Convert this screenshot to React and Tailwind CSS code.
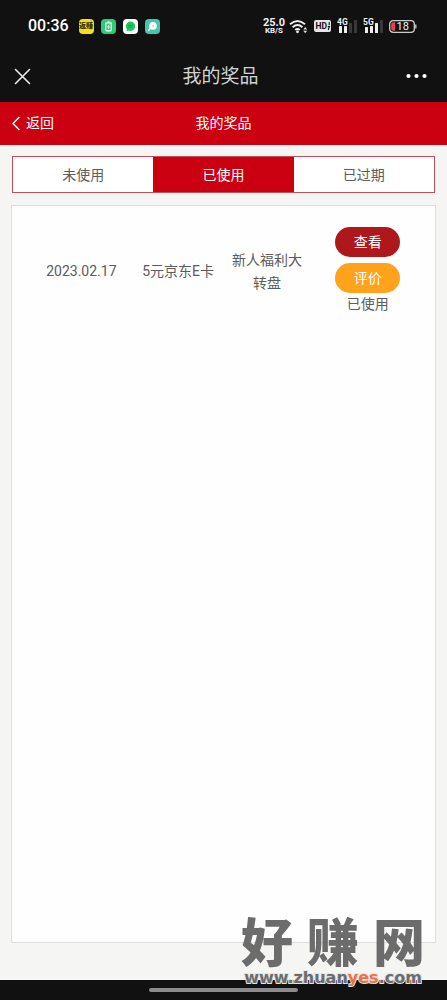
import React from 'react';

const prizes = [
  { date: '2023.02.17', name: '5元京东E卡', activity: '新人福利大转盘', status: '已使用' },
];

const tabs = ['未使用', '已使用', '已过期'];

function NotificationIcons() {
  return (
    <div className="flex items-center gap-[7px]" aria-hidden="true">
      <span className="flex size-[15px] items-center justify-center rounded-[4px] bg-[#f5df1b] text-[7px] leading-none font-black text-[#3a3410]">
        返赚
      </span>
      <svg className="size-[15px]" viewBox="0 0 15 15">
        <rect width="15" height="15" rx="4" fill="#2fca78" />
        <rect x="4.8" y="3.8" width="5.4" height="8" rx="0.8" fill="none" stroke="#fff" strokeWidth="1.2" />
        <path d="M6.3 2.8h2.4M8.2 5.7 6.8 7.8h1.6l-1 2" fill="none" stroke="#fff" strokeWidth="0.9" />
      </svg>
      <svg className="size-[15px]" viewBox="0 0 15 15">
        <rect width="15" height="15" rx="4" fill="#fff" />
        <circle cx="7.5" cy="7.3" r="4.7" fill="#1fc661" />
        <path d="M4 9.5 3.6 12l3-.8z" fill="#1fc661" />
        <path d="M4.8 6.4h5.2M5.2 8.2h4" stroke="#159448" strokeWidth="0.8" />
      </svg>
      <svg className="size-[15px]" viewBox="0 0 15 15">
        <rect width="15" height="15" rx="4" fill="#45c4ae" />
        <circle cx="8" cy="6.9" r="3.8" fill="#fff" />
        <path d="M5.5 9 3.5 11.6" stroke="#fff" strokeWidth="1.4" strokeLinecap="round" />
        <circle cx="8.2" cy="6.9" r="0.9" fill="#8edbd0" />
      </svg>
    </div>
  );
}

function Signal({ label, bars }) {
  return (
    <svg className="h-[16px] w-[20px]" viewBox="0 0 20 16">
      <text x="0" y="7" fontSize="8.5" fontWeight="700" fontFamily="Roboto, sans-serif" fill="#eee">
        {label}
      </text>
      {bars.map((b) => (
        <rect key={b.x} x={b.x} y={b.y} width="3" height={15 - b.y} rx="0.5" fill={b.on ? '#eee' : '#383838'} />
      ))}
    </svg>
  );
}

function StatusBar() {
  return (
    <div className="flex h-[52px] items-center justify-between pr-[30px] pl-[28px] text-[#f0f0f0]">
      <div className="flex items-center gap-[10px]">
        <span className="font-['Roboto',sans-serif] text-[16px] leading-none font-medium text-white">00:36</span>
        <NotificationIcons />
      </div>
      <div className="flex items-center gap-[6px]">
        <div className="flex items-center gap-1">
          <div className="flex flex-col items-center font-['Roboto',sans-serif] font-bold">
            <span className="text-[11px] leading-[9px]">25.0</span>
            <span className="text-[8px] leading-[8px]">KB/S</span>
          </div>
          <svg className="h-[15px] w-[19px]" viewBox="0 0 19 15" fill="none" stroke="#eee" strokeWidth="1.9">
            <path d="M1 5.3Q8.5-1.5 16 5.3M3.6 8.2q4.9-4.3 9.8 0M6.2 10.9q2.3-2 4.6 0" />
            <circle cx="8.5" cy="12.8" r="1.4" fill="#eee" stroke="none" />
            <path d="m14.2 10.5 2-2.4 2 2.4zM14.2 11.8l2 2.4 2-2.4z" fill="#ddd" stroke="none" />
          </svg>
        </div>
        <svg className="h-[12px] w-[17px]" viewBox="0 0 17 12">
          <rect width="17" height="12" rx="2" fill="#e6e6e6" />
          <text x="1.5" y="9.2" fontSize="8.5" fontWeight="700" fontFamily="Roboto, sans-serif" fill="#161616">HD</text>
          <path d="M15.2 2v3.2M13.8 6.6h1.6L14.2 10" fill="none" stroke="#161616" strokeWidth="1.1" />
        </svg>
        <Signal label="4G" bars={[{ x: 2, y: 8, on: true }, { x: 7, y: 8, on: true }, { x: 12, y: 5, on: false }, { x: 17, y: 2, on: false }]} />
        <Signal label="5G" bars={[{ x: 2, y: 9, on: true }, { x: 7, y: 8, on: true }, { x: 12, y: 5, on: true }, { x: 17, y: 2, on: false }]} />
        <svg className="h-[13px] w-[28px]" viewBox="0 0 28 13">
          <rect x="0.7" y="0.7" width="24.6" height="11.6" rx="3.4" fill="none" stroke="#ccc" strokeWidth="1.3" />
          <path d="M26.8 4.5v4" stroke="#ccc" strokeWidth="1.3" />
          <path d="M4.2 2.2H6v8.6H4.2a2 2 0 0 1-2-2V4.2a2 2 0 0 1 2-2z" fill="#e93e4e" />
          <text x="7.5" y="10.4" fontSize="11" fontFamily="Roboto, sans-serif" fill="#f2f2f2">18</text>
        </svg>
      </div>
    </div>
  );
}

function TitleBar() {
  return (
    <header className="grid h-[50px] grid-cols-[1fr_auto_1fr] items-center pr-5 pb-[2px] pl-[14px]">
      <button type="button" aria-label="关闭" className="justify-self-start">
        <svg className="block size-[17px]" viewBox="0 0 17 17" stroke="#ececec" strokeWidth="1.6" strokeLinecap="round">
          <path d="m1.5 1.5 14 14M15.5 1.5l-14 14" />
        </svg>
      </button>
      <h1 className="pt-[2px] text-[19px] leading-6 text-[#d2d2d2]">我的奖品</h1>
      <button type="button" aria-label="更多" className="justify-self-end">
        <svg className="block h-[6px] w-[21px]" viewBox="0 0 21 6" fill="#fff">
          <circle cx="2.5" cy="3" r="2.1" />
          <circle cx="10.5" cy="3" r="2.1" />
          <circle cx="18.5" cy="3" r="2.1" />
        </svg>
      </button>
    </header>
  );
}

function Watermark() {
  return (
    <div className="pointer-events-none absolute right-[22px] bottom-[14px] w-[184px] text-[#6c6c6c]">
      <div className="flex justify-between text-[52px] leading-[50px] font-black">
        <span>好</span>
        <span>赚</span>
        <span>网</span>
      </div>
      <div className="text-center font-['DejaVu_Sans',sans-serif] text-[16px] leading-[16px] font-bold whitespace-nowrap [paint-order:stroke_fill] [-webkit-text-stroke:2px_#e4e4e4]">
        www.zhuan<span className="text-[#f0704a]">yes</span>.com
      </div>
    </div>
  );
}

export default function App() {
  return (
    <div className="relative flex min-h-screen flex-col bg-[#f5f5f4] font-['Roboto','Noto_Sans_CJK_SC',sans-serif] text-[14px] text-[#5c5c5c]">
      <div className="bg-[#111]">
        <StatusBar />
        <TitleBar />
      </div>
      <nav className="grid h-[43px] grid-cols-[1fr_auto_1fr] items-center bg-[#cb0011] px-3 text-white">
        <a href="#back" className="flex items-center gap-[6px]">
          <svg className="h-[15px] w-[8px]" viewBox="0 0 8 15" fill="none" stroke="#fff" strokeWidth="1.5">
            <path d="M7.4 1 1 7.5 7.4 14" />
          </svg>
          返回
        </a>
        <h2>我的奖品</h2>
      </nav>
      <main className="flex flex-1 flex-col gap-3 px-[11px] pt-[11px] pb-[37px]">
        <div role="tablist" className="mx-px grid h-[37px] grid-cols-3 border border-[#c5505c] bg-white">
          {tabs.map((tab) => (
            <button
              key={tab}
              type="button"
              role="tab"
              aria-selected={tab === '已使用'}
              className="pt-[2px] aria-selected:bg-[#cb0011] aria-selected:text-white"
            >
              {tab}
            </button>
          ))}
        </div>
        <section className="flex-1 border border-[#dedede] bg-[#fefefe] pt-[21px] pr-2 pl-5">
          <table className="w-full table-fixed text-center leading-[23px]">
            <tbody>
              {prizes.map((p) => (
                <tr key={p.date}>
                  <td className="w-[25%]">{p.date}</td>
                  <td className="w-[24%] whitespace-nowrap">{p.name}</td>
                  <td className="w-[21%] px-1">{p.activity}</td>
                  <td className="w-[30%]">
                    <div className="flex flex-col items-center">
                      <button type="button" className="h-[30px] w-[65px] rounded-full bg-[#ae181d] text-white">查看</button>
                      <button type="button" className="mt-[6px] h-[30px] w-[65px] rounded-full bg-[#ffa21c] text-white">评价</button>
                      <span>{p.status}</span>
                    </div>
                  </td>
                </tr>
              ))}
            </tbody>
          </table>
        </section>
      </main>
      <footer className="flex h-5 items-center justify-center bg-[#111]">
        <div className="h-1 w-1/3 rounded-full bg-[#8c8c8c]" />
      </footer>
      <Watermark />
    </div>
  );
}
